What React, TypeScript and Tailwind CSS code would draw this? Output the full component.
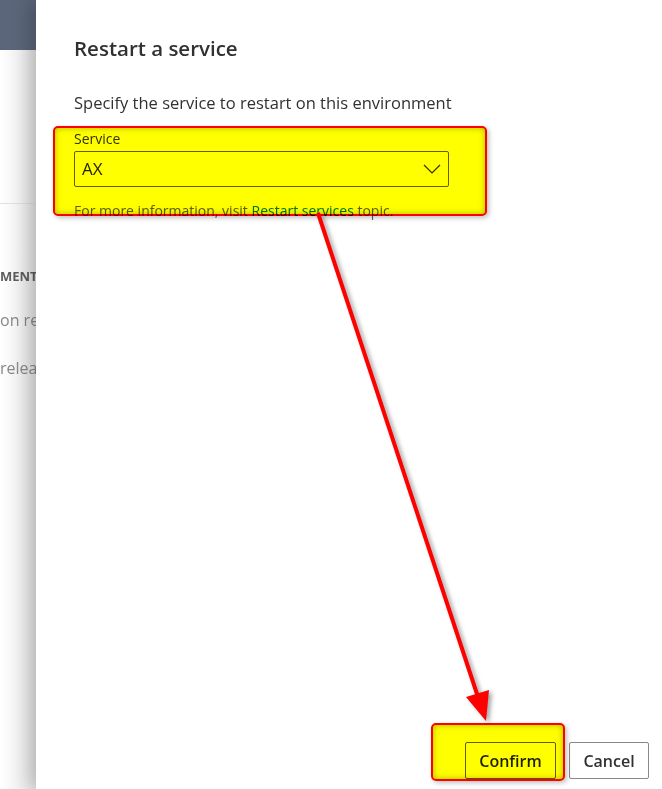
import React from 'react';

const font = { fontFamily: '"Open Sans", "Noto Sans", sans-serif' };

function Highlight({ className }: { className: string }) {
  return (
    <div
      className={`pointer-events-none absolute rounded-[5px] border-2 border-[#ff0000] bg-[#ffff00] mix-blend-multiply shadow-[inset_0_0_6px_rgba(120,120,0,0.55),2px_2px_5px_rgba(0,0,0,0.25)] ${className}`}
    />
  );
}

function Chevron() {
  return (
    <svg width="18" height="10" viewBox="0 0 18 10" fill="none">
      <path d="M1 1l8 8 8-8" stroke="#323130" strokeWidth="1.2" />
    </svg>
  );
}

export default function App() {
  return (
    <div
      className="relative flex h-[789px] w-[662px] overflow-hidden bg-white text-[#323130]"
      style={font}
    >
      {/* page behind the panel */}
      <div className="flex w-[36px] shrink-0 flex-col overflow-hidden bg-gradient-to-r from-white to-[#e6e6e6]">
        <div className="h-[50px] shrink-0 bg-[#5b667a]" />
        <div className="h-[154px] shrink-0 border-b border-[#e1dfdd]" />
        <div className="mt-[63px] whitespace-nowrap text-[13px] font-bold text-[#605e5c]">MENTS</div>
        <div className="mt-[21px] whitespace-nowrap text-[16px] text-[#8a8886]">on release</div>
        <div className="mt-[24px] whitespace-nowrap text-[16px] text-[#8a8886]">release</div>
      </div>

      {/* side panel */}
      <div className="relative z-10 flex flex-1 flex-col bg-white pl-[38px] pr-[13px] shadow-[-6px_0_18px_rgba(0,0,0,0.22)]">
        <h1 className="mt-[33px] text-[20.5px] font-semibold leading-[30px] text-[#323130]">Restart a service</h1>
        <p className="mt-[28px] text-[16.5px] leading-[24px] text-[#323130]">
          Specify the service to restart on this environment
        </p>
        <label className="mt-[14px] text-[14px] font-medium leading-[20px] text-[#323130]">Service</label>
        <div className="mt-[2px] flex h-[36px] w-[375px] items-center justify-between rounded-[2px] border border-[#605e5c] pl-[7px] pr-[7px]">
          <span className="text-[17px] text-[#201f1e]">AX</span>
          <Chevron />
        </div>
        <p className="mt-[15px] text-[14px] leading-[18px] text-[#605e5c]">
          For more information, visit <span className="text-[#0078d4]">Restart services</span> topic.
        </p>

        <div className="mt-auto mb-[10px] flex justify-end gap-[13px]">
          <button className="h-[37px] w-[91px] rounded-[2px] border border-[#605e5c] bg-white text-[16px] font-semibold text-[#201f1e]">
            Confirm
          </button>
          <button className="h-[37px] w-[80px] rounded-[2px] border border-[#8a8886] bg-white text-[16px] font-semibold text-[#323130]">
            Cancel
          </button>
        </div>
      </div>

      {/* annotation overlays */}
      <Highlight className="left-[53px] top-[126px] z-20 h-[90px] w-[434px]" />
      <Highlight className="left-[431px] top-[723px] z-20 h-[58px] w-[134px]" />
      <svg
        className="pointer-events-none absolute left-0 top-0 z-30"
        width="662"
        height="789"
        style={{ filter: 'drop-shadow(3px 2px 2px rgba(0,0,0,0.35))' }}
      >
        <line x1="318" y1="213" x2="478" y2="697" stroke="#ff0000" strokeWidth="4" />
        <polygon points="486,721 466,697 489,690" fill="#ff0000" />
      </svg>
    </div>
  );
}
